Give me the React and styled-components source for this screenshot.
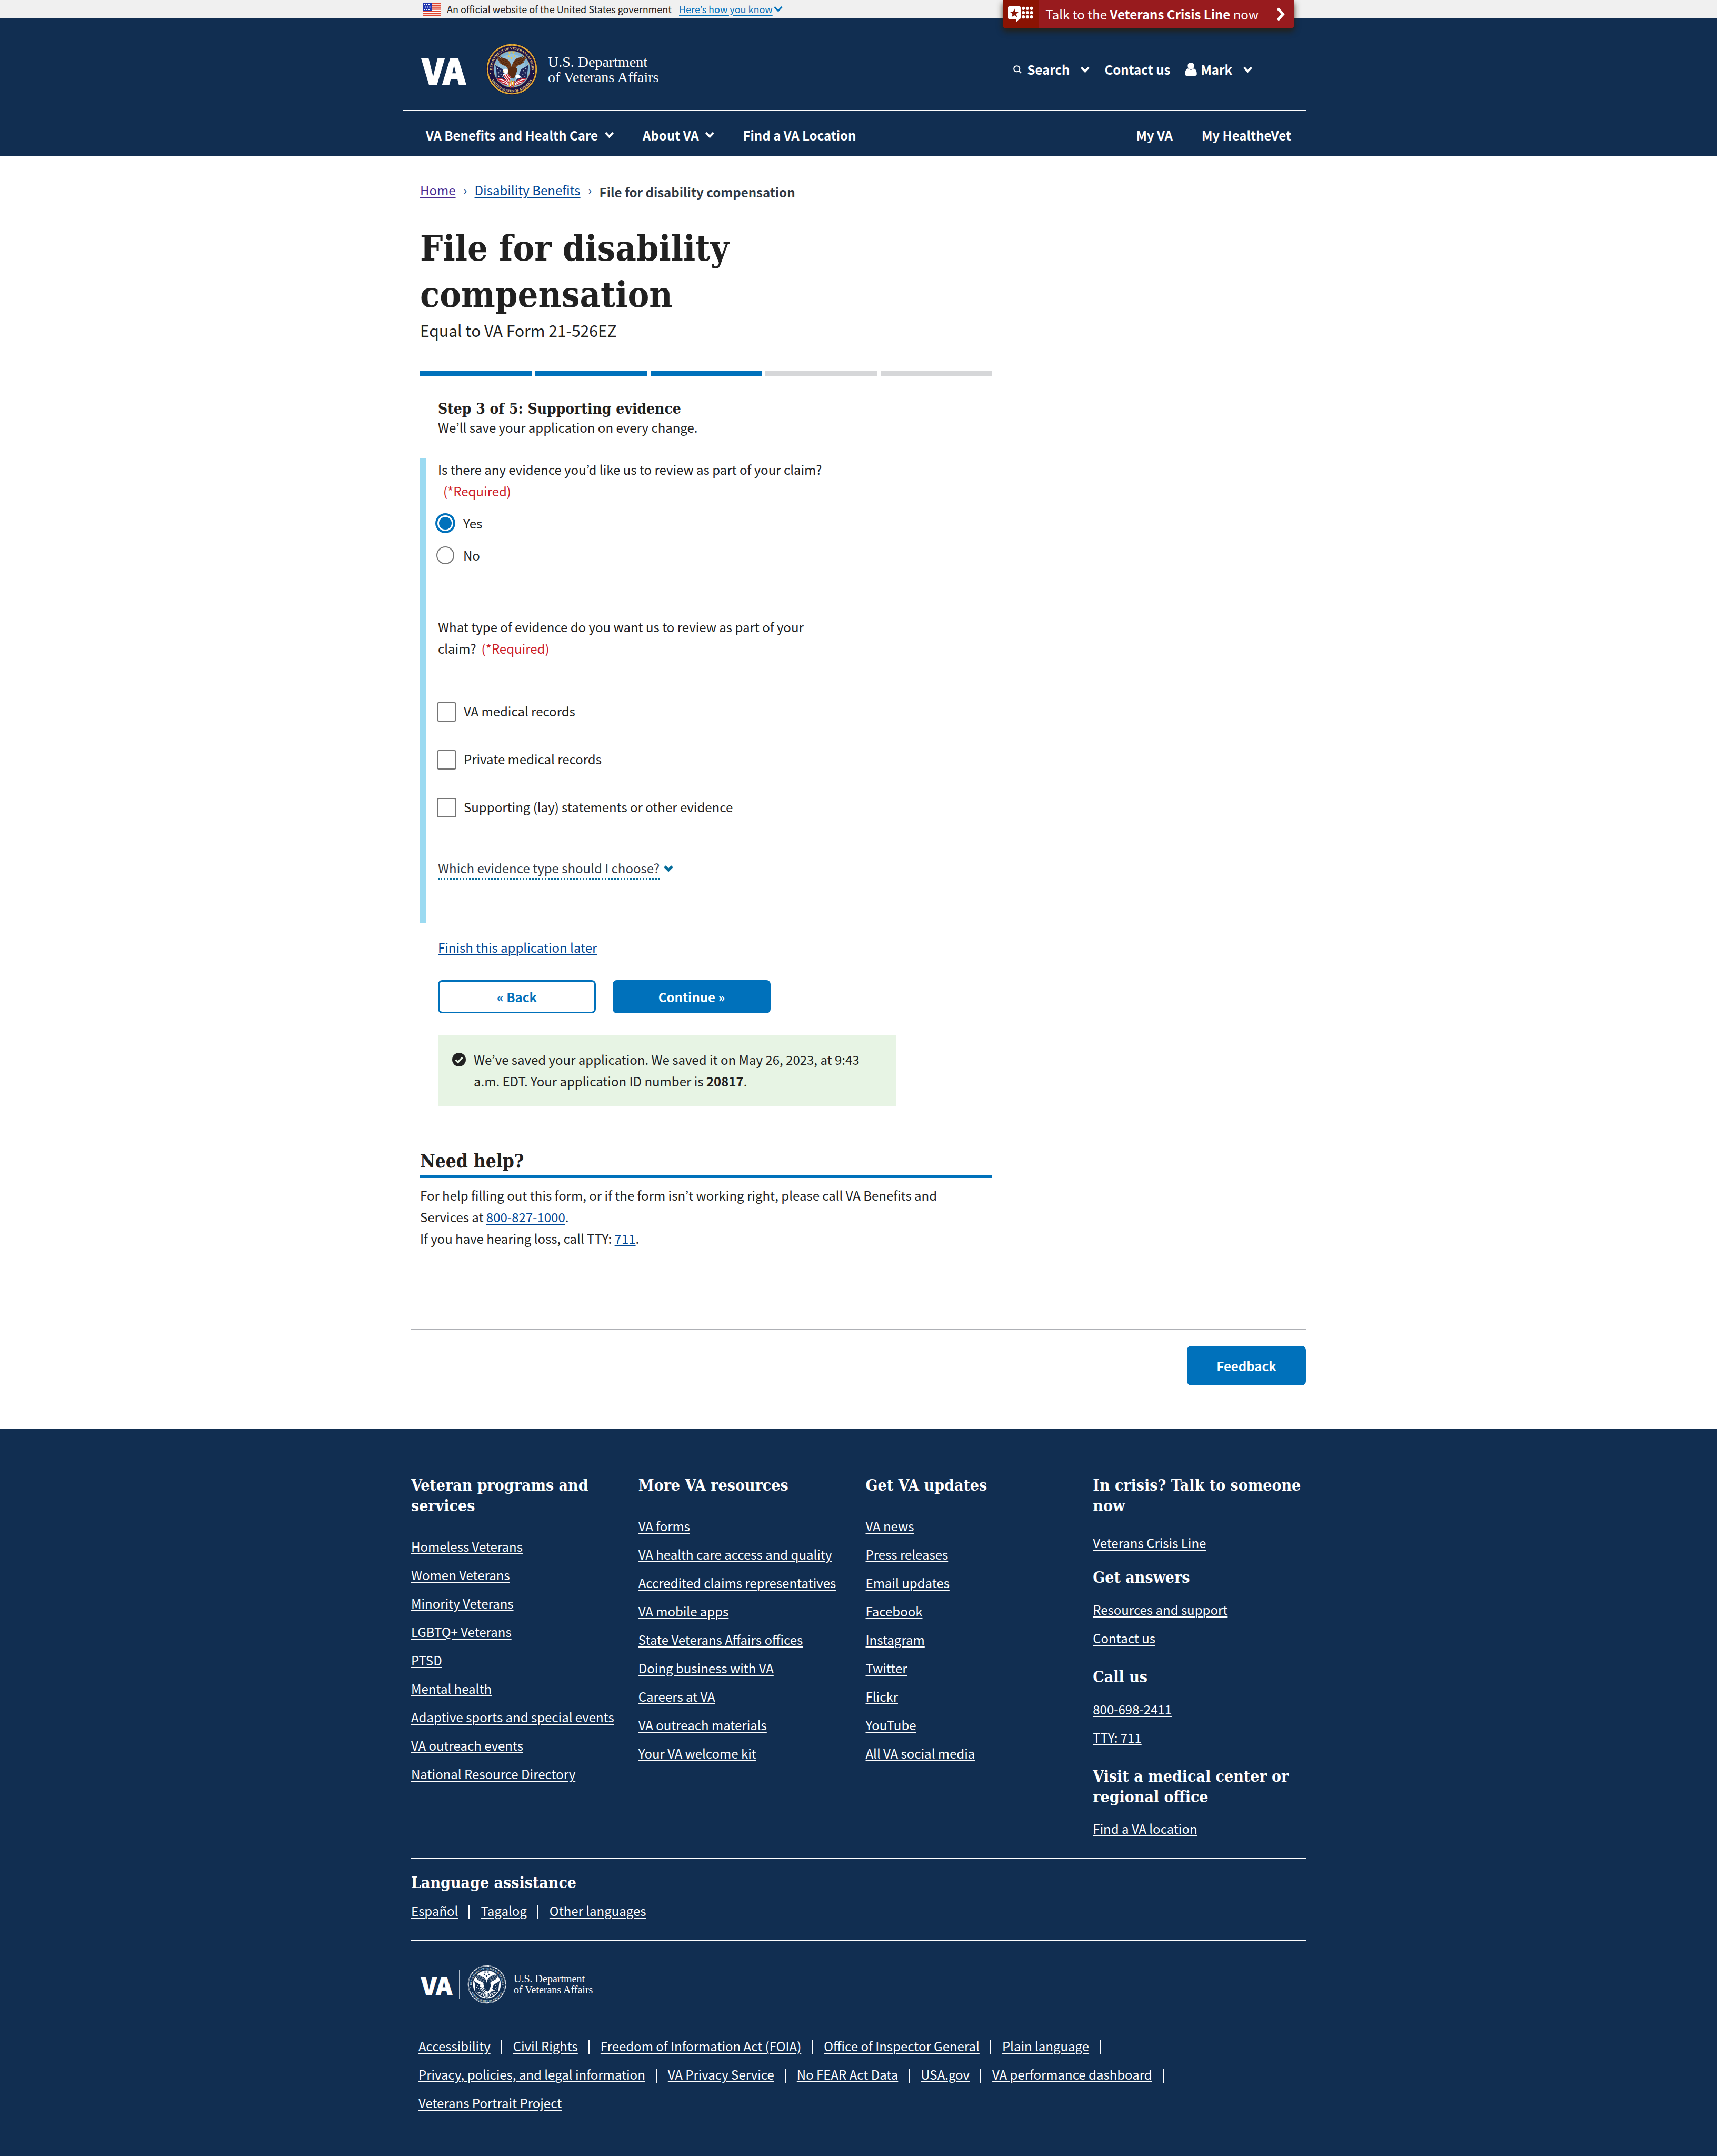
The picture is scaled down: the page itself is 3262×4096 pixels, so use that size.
import React, { useId } from "react";
import styled, { createGlobalStyle, css } from "styled-components";

const c = {
  navy: "#112e51",
  blue: "#0071bb",
  link: "#004795",
  visited: "#4c2c92",
  ink: "#212121",
  red: "#cd2026",
};

const sans = `"Noto Sans CJK KR", "Noto Sans CJK JP", "Open Sans", sans-serif`;
const slab = `"DejaVu Serif Condensed", "DejaVu Serif", serif`;
const roman = `"Liberation Serif", serif`;

const Global = createGlobalStyle`
  *, *::before, *::after { box-sizing: border-box; }
  body {
    margin: 0;
    background: #fff;
    color: ${c.ink};
    font-family: ${sans};
    font-size: 24px;
    line-height: 41px;
  }
  h1, h2, h3, p, ul, ol, fieldset { margin: 0; padding: 0; }
  ul, ol { list-style: none; }
  fieldset { border: 0; min-width: 0; }
  button { font: inherit; cursor: pointer; }
  a { text-decoration-thickness: 2px; text-underline-offset: 3px; }
`;

const Wrap = styled.div`
  width: 100%;
  max-width: 1700px;
  margin: 0 auto;
  position: relative;
`;

/* ---------- Government banner ---------- */

const Banner = styled.div`
  background: #f0f0f0;
  font-size: 18px;
  line-height: 34px;
`;

const BannerInner = styled(Wrap)`
  display: flex;
  align-items: center;
  height: 34px;
  padding: 0 22px;
`;

const Flag = styled.svg`
  width: 34px;
  height: 25px;
  margin-right: 12px;
`;

const BannerToggle = styled.button`
  display: flex;
  align-items: center;
  border: 0;
  background: none;
  padding: 0;
  margin-left: 14px;
  color: ${c.blue};
  text-decoration: underline;
  text-decoration-thickness: 2px;
  text-underline-offset: 3px;
`;

const CrisisButton = styled.button`
  position: absolute;
  z-index: 2;
  top: 0;
  right: 22px;
  display: flex;
  align-items: center;
  height: 54px;
  padding: 0 17px 0 0;
  border: 0;
  border-radius: 0 0 7px 7px;
  overflow: visible;
  background: #981b1e;
  color: #fff;
  font-size: 24px;
  box-shadow: 0 6px 12px rgba(40, 30, 10, 0.8);
`;

const CrisisIcon = styled.span`
  display: flex;
  align-items: center;
  justify-content: center;
  width: 68px;
  height: 54px;
  margin-right: 13px;
  border-radius: 0 0 0 7px;
  background: #8b1303;
`;

const CrisisArrow = styled.svg`
  width: 18px;
  height: 26px;
  margin-left: 33px;
`;

/* ---------- Header ---------- */

const Header = styled.header`
  background: ${c.navy};
  color: #fff;
`;

const HeaderTop = styled.div`
  display: flex;
  align-items: center;
  justify-content: space-between;
  padding: 49px 102px 29px 21px;
`;

const HeaderRule = styled.div`
  height: 2px;
  margin-left: -15px;
  background: #fff;
`;

const Logo = styled.a`
  display: flex;
  align-items: center;
  color: #fff;
  text-decoration: none;
`;

const LogoMark = styled.span`
  width: ${(p) => (p.$small ? 58 : 80)}px;
  font-weight: 900;
  font-size: ${(p) => (p.$small ? 46 : 64)}px;
  line-height: ${(p) => (p.$small ? 52 : 72)}px;
  -webkit-text-stroke: ${(p) => (p.$small ? 1 : 2)}px #fff;
`;

const LogoRule = styled.span`
  width: 1px;
  height: ${(p) => (p.$small ? 54 : 72)}px;
  margin: ${(p) => (p.$small ? "0 15px 0 14px" : "0 23px 0 18px")};
  background: #b5c0cd;
`;

const LogoName = styled.span`
  margin-left: ${(p) => (p.$small ? 14 : 20)}px;
  font-family: ${roman};
  font-size: ${(p) => (p.$small ? 20 : 28)}px;
  line-height: ${(p) => (p.$small ? 21 : 29)}px;
`;

const SealSvg = styled.svg`
  width: ${(p) => (p.$small ? 74 : 97)}px;
  height: ${(p) => (p.$small ? 74 : 97)}px;
`;

const UserMenu = styled.div`
  display: flex;
  align-items: center;
  gap: 28px;
`;

const HeaderButton = styled.button`
  display: flex;
  align-items: center;
  gap: ${(p) => p.$gap || 0}px;
  padding: 0;
  border: 0;
  background: none;
  color: #fff;
  font-weight: 700;
  line-height: 41px;
`;

const HeaderLink = styled.a`
  color: #fff;
  font-weight: 700;
  text-decoration: none;
`;

const ChevronSvg = styled.svg`
  width: 17px;
  height: 12px;
  margin-left: ${(p) => p.$space || 0}px;
`;

const Nav = styled.nav`
  display: flex;
  align-items: center;
  justify-content: space-between;
  height: 86px;
  padding: 4px 28px 0;
`;

const NavGroup = styled.div`
  display: flex;
  gap: 55px;
`;

/* ---------- Main ---------- */

const Main = styled.main`
  padding: 43px 17px 0;
`;

const Crumbs = styled.ol`
  display: flex;
  height: 45px;
`;

const Crumb = styled.li`
  display: flex;
  ${(p) => p.$current && css`
    padding-top: 4px;
    color: #323a45;
    font-weight: 700;
  `}
`;

const CrumbSep = styled.span`
  width: 36px;
  text-align: center;
  color: ${c.link};
`;

const TextLink = styled.a`
  color: ${(p) => (p.$visited ? c.visited : c.link)};
`;

const Column = styled.div`
  max-width: 1087px;
`;

const Title = styled.h1`
  max-width: 800px;
  margin-top: 42px;
  font-family: ${slab};
  font-size: 68px;
  line-height: 88px;
`;

const Subtitle = styled.p`
  font-size: 30px;
  line-height: 48px;
`;

const Progress = styled.div`
  display: flex;
  gap: 7px;
  margin-top: 54px;
`;

const Segment = styled.span`
  flex: 1;
  height: 10px;
  background: ${(p) => (p.$done ? c.blue : "#d6d7d9")};
`;

const Indent = styled.div`
  padding-left: 34px;
`;

const StepTitle = styled.h2`
  margin-top: 48px;
  font-family: ${slab};
  font-size: 28px;
  line-height: 28px;
`;

const Questions = styled.div`
  margin-top: 39px;
  padding: 0 0 82px 22px;
  border-left: 12px solid #9bdaf1;
`;

const Legend = styled.legend`
  max-width: 770px;
  padding: 0;
`;

const Required = styled.span`
  display: inline-block;
  margin-left: 10px;
  color: ${c.red};
`;

const Options = styled.div`
  display: flex;
  flex-direction: column;
  gap: ${(p) => p.$gap}px;
  margin: ${(p) => p.$top}px 0 0 -3px;
`;

const Fields = styled.fieldset`
  margin-top: ${(p) => p.$top || 0}px;
`;

const Option = styled.label`
  display: flex;
  gap: 17px;
  align-items: ${(p) => (p.$box ? "flex-start" : "center")};
  line-height: ${(p) => (p.$box ? 34 : 41)}px;
`;

const Radio = styled.input`
  appearance: none;
  width: 34px;
  height: 34px;
  margin: 0;
  padding: 3px;
  border: 2px solid #757575;
  border-radius: 50%;
  background-clip: content-box;
  &:checked {
    border-color: ${c.blue};
    background-color: ${c.blue};
    box-shadow: 0 0 0 2px ${c.blue};
  }
`;

const Checkbox = styled.input`
  appearance: none;
  width: 37px;
  height: 37px;
  margin: 0 -3px 0 1px;
  border: 2px solid #757575;
  border-radius: 4px;
  background: #fff;
  &:checked { background: ${c.blue}; }
`;

const InfoToggle = styled.button`
  display: flex;
  margin-top: 77px;
  padding: 0;
  border: 0;
  background: none;
  color: #323a45;
`;

const InfoText = styled.span`
  line-height: 38px;
  border-bottom: 3px dotted #046b99;
`;

const InfoChevron = styled.svg`
  width: 18px;
  height: 12px;
  margin: 14px 0 0 8px;
`;

const FinishRow = styled.p`
  margin-top: 26px;
`;

const Actions = styled.div`
  display: flex;
  gap: 32px;
  margin-top: 42px;
`;

const Button = styled.button`
  width: ${(p) => p.$width || 300}px;
  height: ${(p) => p.$height || 63}px;
  padding: 0;
  border: 3px solid ${c.blue};
  border-radius: 8px;
  background: ${(p) => (p.$outline ? "#fff" : c.blue)};
  color: ${(p) => (p.$outline ? c.blue : "#fff")};
  font-weight: 700;
`;

const Alert = styled.div`
  display: flex;
  gap: 15px;
  max-width: 870px;
  margin-top: 41px;
  padding: 26px 27px 28px;
  background: #e7f4e4;
`;

const AlertIcon = styled.svg`
  flex: none;
  width: 26px;
  height: 26px;
  margin-top: 8px;
`;

const HelpTitle = styled.h2`
  margin-top: 82px;
  padding-bottom: 5px;
  border-bottom: 5px solid ${c.blue};
  font-family: ${slab};
  font-size: 35px;
  line-height: 44px;
`;

const HelpText = styled.p`
  max-width: 1040px;
  margin-top: 12px;
`;

const FeedbackRow = styled.div`
  display: flex;
  justify-content: flex-end;
  margin-top: 151px;
  padding: 30px 0 82px;
  border-top: 3px solid #aeb0b5;
`;

/* ---------- Footer ---------- */

const Footer = styled.footer`
  padding: 88px 0 83px;
  background: ${c.navy};
  color: #fff;
`;

const FooterGrid = styled.div`
  display: grid;
  grid-template-columns: repeat(4, minmax(0, 1fr));
  gap: 27px;
`;

const FooterTitle = styled.h2`
  margin-top: ${(p) => p.$top || 0}px;
  font-family: ${slab};
  font-size: 30px;
  line-height: 39px;
`;

const LinkList = styled.ul`
  display: flex;
  flex-direction: column;
  gap: 13px;
  margin-top: ${(p) => p.$top}px;
  white-space: nowrap;
`;

const FooterLink = styled.a`
  color: #fff;
`;

const FooterRule = styled.div`
  height: 2px;
  margin-top: 35px;
  background: #fff;
`;

const Language = styled.div`
  padding-top: 26px;
`;

const InlineList = styled.ul`
  display: flex;
  flex-wrap: wrap;
  row-gap: 13px;
  margin-top: ${(p) => p.$top}px;
  padding-left: ${(p) => p.$indent || 0}px;
`;

const InlineItem = styled.li`
  display: flex;
  align-items: center;
  &:not(:last-child)::after {
    content: "";
    width: 2px;
    height: 27px;
    margin: 5px 21px 0 20px;
    background: #fff;
  }
`;

const FooterLogo = styled.div`
  display: flex;
  padding: 46px 0 0 19px;
`;

/* ---------- Drawings ---------- */

function Chevron({ space, color = "#fff", width = 4 }) {
  return (
    <ChevronSvg $space={space} viewBox="0 0 17 12" aria-hidden="true">
      <path d="M1.500 2 8.500 9.500 15.500 2" fill="none" stroke={color} strokeWidth={width} />
    </ChevronSvg>
  );
}

function UsFlag() {
  return (
    <Flag viewBox="0 0 34 25" aria-hidden="true">
      <rect width="34" height="25" fill="#fff" />
      {[0, 1, 2, 3, 4, 5, 6].map((i) => (
        <rect key={i} y={i * 3.8} width="34" height="2.2" fill="#e0452f" />
      ))}
      <rect width="17" height="16" fill="#1f35b0" />
      {[3, 7.5, 12].map((y, r) =>
        [0, 1, 2].map((i) => (
          <rect key={`${y}-${i}`} x={3 + i * 4 + (r === 1 ? 1.5 : 0)} y={y} width="2" height="2" fill="#fff" />
        ))
      )}
    </Flag>
  );
}

const starPoints = (x, y, r) =>
  Array.from({ length: 10 }, (_, i) => {
    const a = (Math.PI / 5) * i - Math.PI / 2;
    const d = i % 2 ? r * 0.4 : r;
    return `${(x + d * Math.cos(a)).toFixed(1)},${(y + d * Math.sin(a)).toFixed(1)}`;
  }).join(" ");

const colourSeal = {
  rope: "#e8b23a", rim: "#171038", band: "#1b1446", text: "#e6d08a", sky: "#7fb2d3",
  star: "#f0c93c", wing: "#6b3818", feather: "#3f1e0c", body: "#5a2c12",
  head: "#fff", flag: "#1d2558", stripe: "#c3202f", pale: "#fff", gold: "#e9b52f",
};
const monoSeal = {
  rope: "#fff", rim: c.navy, band: c.navy, text: "#dfe5ec", sky: "#fff",
  star: c.navy, wing: c.navy, feather: "#c9d2dc", body: c.navy,
  head: "#fff", flag: c.navy, stripe: c.navy, pale: "#fff", gold: "#fff",
};

function Seal({ small }) {
  const id = useId();
  const k = small ? monoSeal : colourSeal;
  const wing =
    "M160 205 C150 175 140 158 128 150 C112 146 96 136 84 126 L94 126 C84 118 76 108 71 98 L84 104 C76 96 72 88 71 80 C84 92 94 97 104 101 C98 95 93 90 91 84 C108 97 124 98 138 104 C152 112 164 132 170 156 L182 205 Z";
  const feathers =
    "M84 92 C100 106 118 116 142 122 M88 108 C104 122 122 132 146 136 M98 126 C116 138 132 144 150 148 M112 98 C128 106 142 116 152 132";
  return (
    <SealSvg $small={small} viewBox="0 0 344 344" aria-hidden="true">
      <defs>
        <path id={`${id}t`} d="M43 205 A133 133 0 1 1 301 205" />
        <path id={`${id}b`} d="M22 214 A156 156 0 0 0 322 214" />
      </defs>
      <circle cx="172" cy="172" r="172" fill={k.rim} />
      <circle cx="172" cy="172" r="164" fill="none" stroke={k.rope} strokeWidth="10" />
      <circle cx="172" cy="172" r="164" fill="none" stroke={small ? c.navy : "#b98322"} strokeWidth="8" strokeDasharray="3 6" />
      <circle cx="172" cy="172" r="158" fill={k.band} />
      <circle cx="172" cy="172" r="122" fill={k.sky} stroke={k.rope} strokeWidth="2" />
      {!small && <ellipse cx="172" cy="150" rx="90" ry="80" fill="#a9cfe4" opacity="0.55" />}
      <g fill={k.text} fontFamily={roman} fontWeight="700" fontSize="23">
        <text><textPath href={`#${id}t`} startOffset="50%" textAnchor="middle">DEPARTMENT OF VETERANS AFFAIRS</textPath></text>
        <text><textPath href={`#${id}b`} startOffset="50%" textAnchor="middle">UNITED STATES OF AMERICA</textPath></text>
      </g>
      <circle cx="28" cy="200" r="4" fill={k.text} />
      <circle cx="316" cy="200" r="4" fill={k.text} />
      {[[156, 62], [182, 62], [150, 86], [190, 86], [169, 98]].map(([x, y]) => (
        <polygon key={`${x}-${y}`} points={starPoints(x, y, 10)} fill={k.star} />
      ))}
      <path d="M57 132 L166 268 M287 132 L176 268" stroke={small ? "#fff" : "#c9c3b4"} strokeWidth="4" />
      <path d="M60 142 C78 158 96 162 112 176 C122 206 132 226 146 254 C120 236 94 234 68 236 C72 210 68 176 60 142 Z" fill={k.flag} />
      <path d="M284 142 C266 158 248 162 232 176 C222 206 212 226 198 254 C224 236 250 234 272 232 C276 206 278 176 284 142 Z" fill={k.flag} />
      {[[76, 170], [92, 182], [82, 196], [98, 206], [84, 220], [108, 224], [266, 170], [250, 182], [262, 196], [246, 206], [260, 220], [238, 226]].map(([x, y]) => (
        <polygon key={`${x}-${y}`} points={starPoints(x, y, 6)} fill={k.pale} />
      ))}
      <path d="M70 236 C98 228 124 238 150 258 L160 282 C132 282 98 272 70 236 Z" fill={k.stripe} />
      <path d="M272 232 C246 230 218 238 194 258 L184 282 C212 282 246 268 272 232 Z" fill={k.stripe} />
      <path d="M84 240 C108 240 130 252 150 270 M98 256 C116 258 134 266 154 280 M260 240 C236 240 214 252 194 270 M246 256 C228 258 210 266 190 280" fill="none" stroke={k.pale} strokeWidth="5" />
      <path d={wing} fill={k.wing} />
      <path d={wing} fill={k.wing} transform="matrix(-1 0 0 1 341 -4)" />
      <path d={feathers} fill="none" stroke={k.feather} strokeWidth="3" />
      <path d={feathers} fill="none" stroke={k.feather} strokeWidth="3" transform="matrix(-1 0 0 1 341 -4)" />
      <path d="M138 176 C156 156 192 150 210 170 C206 192 196 212 188 232 C176 240 164 232 158 214 C146 206 138 192 138 176 Z" fill={k.body} />
      <path d="M112 180 C116 168 134 166 146 176 C150 190 142 204 128 204 C124 196 118 194 111 192 Z" fill={k.head} stroke={small ? c.navy : "none"} strokeWidth="2" />
      <path d="M112 180 L108 192 L118 190 Z" fill={k.gold} />
      <path d="M110 208 C124 196 146 200 158 214 C166 234 160 250 148 258 C134 246 120 232 110 208 Z" fill={k.pale} />
      <path d="M118 212 L150 254 M132 206 L158 246 M146 206 L162 230" stroke={k.stripe} strokeWidth="7" />
      <path d="M196 222 C204 206 212 204 222 214 L234 224 L222 234 L200 236 Z" fill={k.pale} />
      <path d="M150 258 L192 250 L184 298 L172 284 L160 300 Z" fill={k.stripe} />
      <path d="M158 250 L154 294 M170 246 L168 282 M182 250 L182 288" stroke={k.gold} strokeWidth="6" />
      <path d="M164 258 L161 286 M176 256 L176 276" stroke={k.pale} strokeWidth="4" />
    </SealSvg>
  );
}

function VaLogo({ small }) {
  return (
    <Logo href="#">
      <LogoMark $small={small}>VA</LogoMark>
      <LogoRule $small={small} />
      <Seal small={small} />
      <LogoName $small={small}>
        U.S. Department
        <br />
        of Veterans Affairs
      </LogoName>
    </Logo>
  );
}

function CrisisDrawing() {
  return (
    <svg width="48" height="30" viewBox="0 0 56 35" aria-hidden="true">
      <path d="M3 0H25a3 3 0 0 1 3 3V25a3 3 0 0 1-3 3L18.500 35V28H3a3 3 0 0 1-3-3V3a3 3 0 0 1 3-3Z" fill="#fff" />
      <polygon points={starPoints(14, 15.5, 10.5)} fill="#8b1303" />
      {[4.5, 14, 23.5].map((y) =>
        [34, 43, 52].map((x) => <circle key={`${x}-${y}`} cx={x} cy={y} r="3.6" fill="#fff" />)
      )}
    </svg>
  );
}

function SearchDrawing() {
  return (
    <svg width="16" height="16" viewBox="0 0 19 19" aria-hidden="true">
      <circle cx="8" cy="8" r="6.6" fill="none" stroke="#fff" strokeWidth="2.4" />
      <path d="m12.700 12.700 5 5" stroke="#fff" strokeWidth="2.800" />
    </svg>
  );
}

function UserDrawing() {
  return (
    <svg width="23" height="25" viewBox="0 0 27 30" aria-hidden="true">
      <path d="M6 13.500h15c4 2 6 6 6 12q0 4.500-4 4.500H4q-4 0-4-4.500c0-6 2-10 6-12Z" fill="#fff" />
      <ellipse cx="13.500" cy="7.600" rx="8" ry="8.300" fill="#fff" stroke={c.navy} strokeWidth="1.200" />
    </svg>
  );
}

/* ---------- Content ---------- */

const programs = ["Homeless Veterans", "Women Veterans", "Minority Veterans", "LGBTQ+ Veterans", "PTSD", "Mental health", "Adaptive sports and special events", "VA outreach events", "National Resource Directory"];
const resources = ["VA forms", "VA health care access and quality", "Accredited claims representatives", "VA mobile apps", "State Veterans Affairs offices", "Doing business with VA", "Careers at VA", "VA outreach materials", "Your VA welcome kit"];
const updates = ["VA news", "Press releases", "Email updates", "Facebook", "Instagram", "Twitter", "Flickr", "YouTube", "All VA social media"];
const languages = ["Español", "Tagalog", "Other languages"];
const legal = ["Accessibility", "Civil Rights", "Freedom of Information Act (FOIA)", "Office of Inspector General", "Plain language", "Privacy, policies, and legal information", "VA Privacy Service", "No FEAR Act Data", "USA.gov", "VA performance dashboard", "Veterans Portrait Project"];
const evidence = ["VA medical records", "Private medical records", "Supporting (lay) statements or other evidence"];

function Links({ items, top }) {
  return (
    <LinkList $top={top}>
      {items.map((t) => (
        <li key={t}><FooterLink href="#">{t}</FooterLink></li>
      ))}
    </LinkList>
  );
}

function Inline({ items, top, indent }) {
  return (
    <InlineList $top={top} $indent={indent}>
      {items.map((t) => (
        <InlineItem key={t}><FooterLink href="#">{t}</FooterLink></InlineItem>
      ))}
    </InlineList>
  );
}

export default function App() {
  return (
    <>
      <Global />
      <Banner>
        <BannerInner>
          <UsFlag />
          <span>An official website of the United States government</span>
          <BannerToggle type="button">
            Here’s how you know
            <Chevron space={2} color={c.blue} width={3} />
          </BannerToggle>
          <CrisisButton type="button">
            <CrisisIcon><CrisisDrawing /></CrisisIcon>
            <span>Talk to the <b>Veterans Crisis Line</b> now</span>
            <CrisisArrow viewBox="0 0 18 26" aria-hidden="true">
              <path d="M3.500 2 13.500 13 3.500 24" fill="none" stroke="#fff" strokeWidth="5" />
            </CrisisArrow>
          </CrisisButton>
        </BannerInner>
      </Banner>

      <Header>
        <Wrap>
          <HeaderTop>
            <VaLogo />
            <UserMenu>
              <HeaderButton type="button" $gap={10}>
                <SearchDrawing />
                Search
                <Chevron space={11} />
              </HeaderButton>
              <HeaderLink href="#">Contact us</HeaderLink>
              <HeaderButton type="button" $gap={7}>
                <UserDrawing />
                Mark
                <Chevron space={14} />
              </HeaderButton>
            </UserMenu>
          </HeaderTop>
          <HeaderRule />
          <Nav>
            <NavGroup>
              <HeaderButton type="button">VA Benefits and Health Care<Chevron space={13} /></HeaderButton>
              <HeaderButton type="button">About VA<Chevron space={12} /></HeaderButton>
              <HeaderLink href="#">Find a VA Location</HeaderLink>
            </NavGroup>
            <NavGroup>
              <HeaderLink href="#">My VA</HeaderLink>
              <HeaderLink href="#">My HealtheVet</HeaderLink>
            </NavGroup>
          </Nav>
        </Wrap>
      </Header>

      <Wrap>
        <Main>
          <nav aria-label="Breadcrumb">
            <Crumbs>
              <Crumb><TextLink href="#" $visited>Home</TextLink><CrumbSep>›</CrumbSep></Crumb>
              <Crumb><TextLink href="#">Disability Benefits</TextLink><CrumbSep>›</CrumbSep></Crumb>
              <Crumb $current aria-current="page">File for disability compensation</Crumb>
            </Crumbs>
          </nav>
          <Column>
            <Title>File for disability compensation</Title>
            <Subtitle>Equal to VA Form 21-526EZ</Subtitle>
            <Progress aria-hidden="true">
              {[1, 2, 3, 4, 5].map((n) => <Segment key={n} $done={n <= 3} />)}
            </Progress>
            <Indent>
              <StepTitle>Step 3 of 5: Supporting evidence</StepTitle>
              <p>We’ll save your application on every change.</p>
            </Indent>
            <Questions>
              <Fields>
                <Legend>
                  Is there any evidence you’d like us to review as part of your claim?
                  <Required>(*Required)</Required>
                </Legend>
                <Options $gap={20} $top={20}>
                  <Option><Radio type="radio" name="evidence" defaultChecked />Yes</Option>
                  <Option><Radio type="radio" name="evidence" />No</Option>
                </Options>
              </Fields>
              <Fields $top={95}>
                <Legend>
                  What type of evidence do you want us to review as part of your claim?
                  <Required>(*Required)</Required>
                </Legend>
                <Options $gap={54} $top={82}>
                  {evidence.map((t) => (
                    <Option key={t} $box><Checkbox type="checkbox" />{t}</Option>
                  ))}
                </Options>
              </Fields>
              <InfoToggle type="button">
                <InfoText>Which evidence type should I choose?</InfoText>
                <InfoChevron viewBox="0 0 18 12" aria-hidden="true">
                  <path d="M2 2 9 9 16 2" fill="none" stroke="#046b99" strokeWidth="5" />
                </InfoChevron>
              </InfoToggle>
            </Questions>
            <Indent>
              <FinishRow><TextLink href="#">Finish this application later</TextLink></FinishRow>
              <Actions>
                <Button type="button" $outline>« Back</Button>
                <Button type="button">Continue »</Button>
              </Actions>
              <Alert role="status">
                <AlertIcon viewBox="0 0 26 26" aria-hidden="true">
                  <circle cx="13" cy="13" r="13" fill={c.ink} />
                  <path d="m6.500 13.500 4.500 4.500 8.500-9" fill="none" stroke="#e7f4e4" strokeWidth="3.500" />
                </AlertIcon>
                <p>
                  We’ve saved your application. We saved it on May 26, 2023, at 9:43 a.m. EDT. Your application ID number is <b>20817</b>.
                </p>
              </Alert>
            </Indent>
            <HelpTitle>Need help?</HelpTitle>
            <HelpText>
              For help filling out this form, or if the form isn’t working right, please call VA Benefits and Services at <TextLink href="#">800-827-1000</TextLink>.
              <br />
              If you have hearing loss, call TTY: <TextLink href="#">711</TextLink>.
            </HelpText>
          </Column>
        </Main>
        <FeedbackRow>
          <Button type="button" $width={226} $height={75}>Feedback</Button>
        </FeedbackRow>
      </Wrap>

      <Footer>
        <Wrap>
          <FooterGrid>
            <div>
              <FooterTitle>Veteran programs and services</FooterTitle>
              <Links items={programs} top={37} />
            </div>
            <div>
              <FooterTitle>More VA resources</FooterTitle>
              <Links items={resources} top={37} />
            </div>
            <div>
              <FooterTitle>Get VA updates</FooterTitle>
              <Links items={updates} top={37} />
            </div>
            <div>
              <FooterTitle>In crisis? Talk to someone now</FooterTitle>
              <Links items={["Veterans Crisis Line"]} top={30} />
              <FooterTitle $top={26}>Get answers</FooterTitle>
              <Links items={["Resources and support", "Contact us"]} top={21} />
              <FooterTitle $top={34}>Call us</FooterTitle>
              <Links items={["800-698-2411", "TTY: 711"]} top={21} />
              <FooterTitle $top={34}>Visit a medical center or regional office</FooterTitle>
              <Links items={["Find a VA location"]} top={20} />
            </div>
          </FooterGrid>
          <FooterRule />
          <Language>
            <FooterTitle>Language assistance</FooterTitle>
            <Inline items={languages} top={13} />
          </Language>
          <FooterRule />
          <FooterLogo><VaLogo small /></FooterLogo>
          <Inline items={legal} top={59} indent={14} />
        </Wrap>
      </Footer>
    </>
  );
}
